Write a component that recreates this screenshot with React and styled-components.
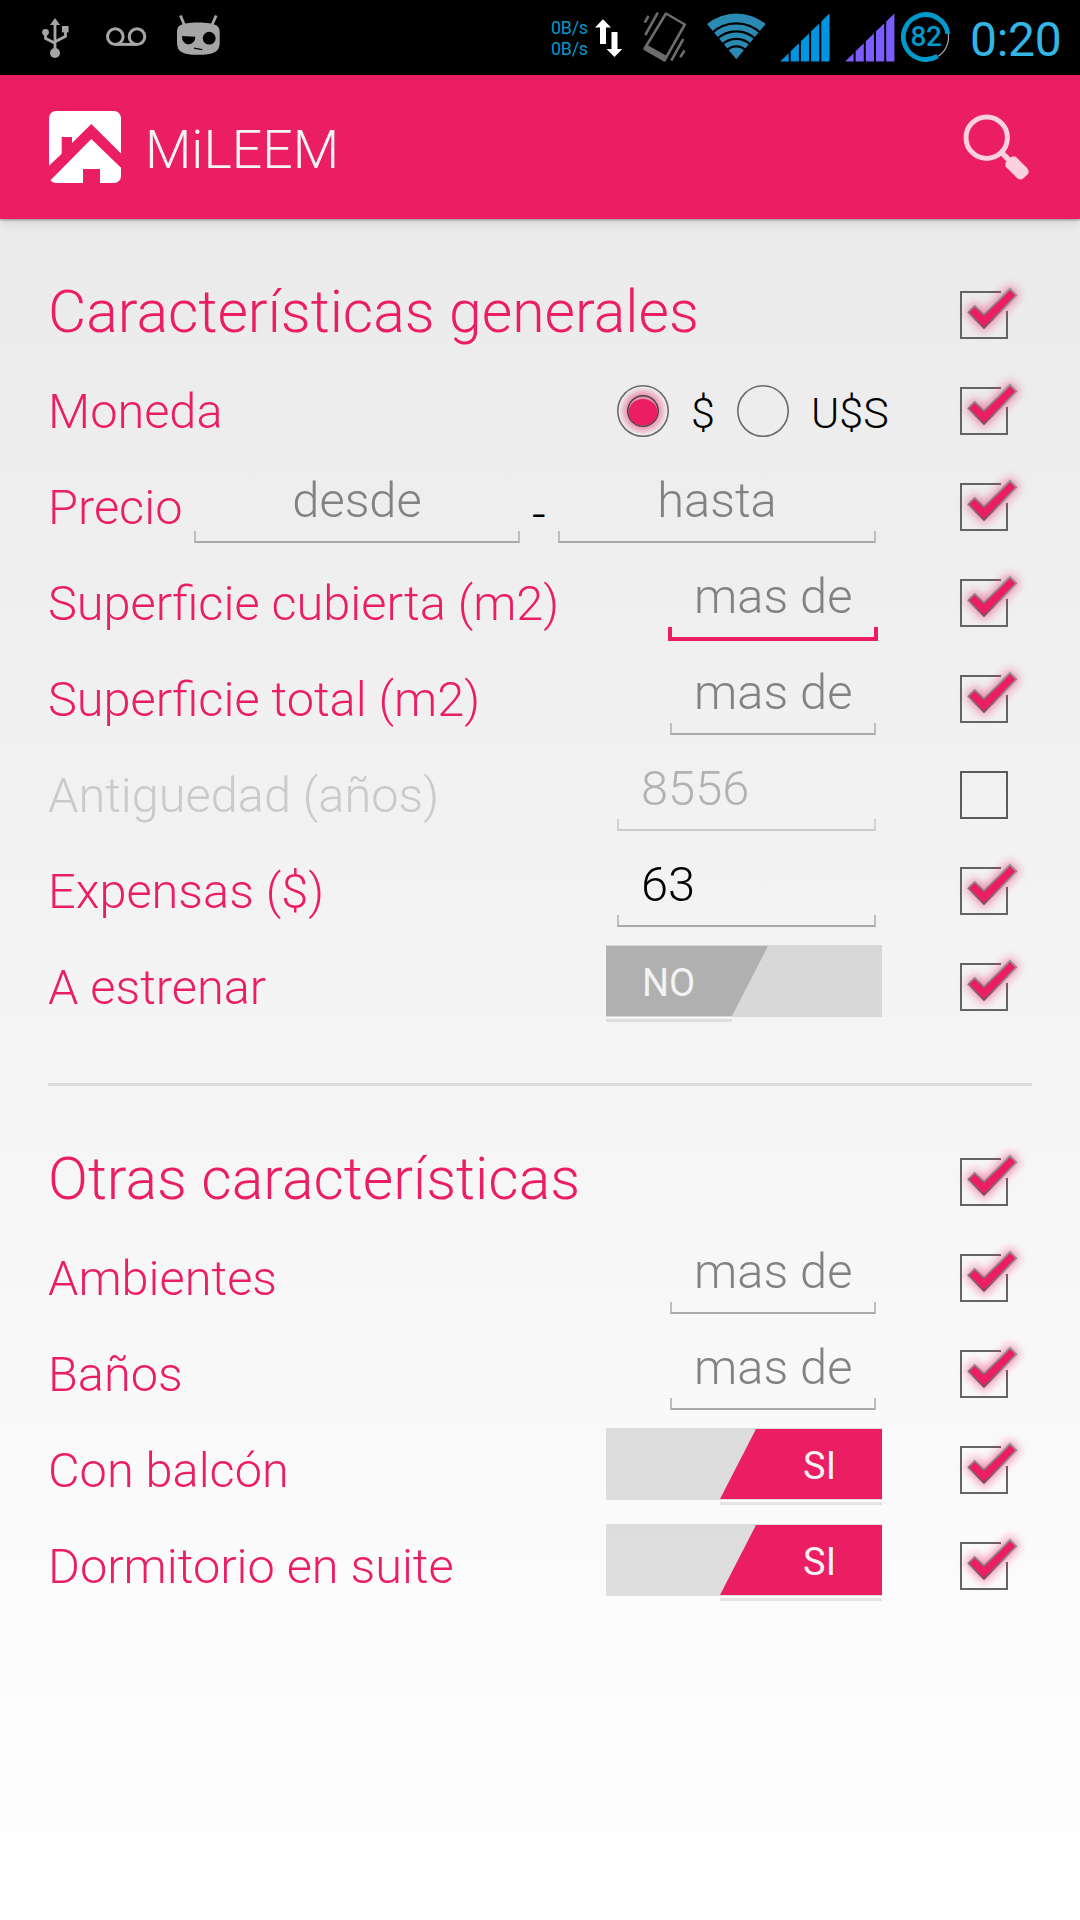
import React from "react";
import styled, { createGlobalStyle } from "styled-components";

const PINK = "#eb1e63";

const GlobalStyle = createGlobalStyle`
  * { box-sizing: border-box; }
  body { margin: 0; font-family: Roboto, "Noto Sans", sans-serif; }
`;

const Screen = styled.div`
  width: 1080px;
  height: 1920px;
  display: flex;
  flex-direction: column;
  overflow: hidden;
  background: linear-gradient(#e8e8e8, #ffffff);
`;

const StatusBar = styled.header`
  display: flex;
  height: 75px;
  background: #000;
`;

const StatusIcons = styled.svg`
  display: block;
  flex: none;
  width: ${(p) => p.$w}px;
  height: 75px;
`;

const Spacer = styled.div`
  flex: 1;
`;

const NetSpeed = styled.div`
  width: 43px;
  padding-top: 17px;
  font-size: 17.8px;
  line-height: 21px;
  letter-spacing: -0.2px;
  color: #0099cc;
  white-space: nowrap;
`;

const Battery = styled.div`
  display: grid;
  width: 50px;
  height: 75px;
  margin-right: 19px;
  > * { grid-area: 1 / 1; }
`;

const BatteryText = styled.span`
  justify-self: center;
  font-size: 28px;
  font-weight: 500;
  line-height: 73px;
  letter-spacing: -0.4px;
  color: #0099cc;
`;

const Clock = styled.time`
  width: 110px;
  font-size: 48px;
  line-height: 79px;
  color: #33b5e5;
  letter-spacing: -0.3px;
`;

const ActionBar = styled.nav`
  display: flex;
  align-items: center;
  height: 144px;
  padding: 0 48px 0 49px;
  background: ${PINK};
  box-shadow: 0 1px 2px rgba(0, 0, 0, 0.35), 0 3px 10px rgba(0, 0, 0, 0.12);
`;

const AppTitle = styled.h1`
  flex: 1;
  margin: 0;
  padding: 5px 0 0 24px;
  font-size: 53.6px;
  font-weight: 300;
  color: #f3f3f3;
`;

const Section = styled.section`
  display: flex;
  flex-direction: column;
  margin: ${(p) => p.$top}px 48px 0;
`;

const Divider = styled.hr`
  width: 984px;
  height: 3px;
  margin: 48px 48px 0;
  border: 0;
  background: #dcdcdc;
`;

const Row = styled.div`
  display: flex;
  height: 96px;
`;

const Label = styled.span`
  flex: 1;
  font-size: 48.7px;
  font-weight: 300;
  line-height: 98px;
  white-space: nowrap;
  color: ${(p) => (p.$off ? "#cacaca" : PINK)};
`;

const Heading = styled.h2`
  flex: 1;
  margin: 0;
  font-size: 58.9px;
  font-weight: 300;
  line-height: 90px;
  white-space: nowrap;
  color: ${PINK};
`;

const Control = styled.div`
  display: flex;
  margin-right: ${(p) => p.$gap}px;
`;

const Field = styled.div`
  display: flex;
  flex-direction: column;
  width: ${(p) => p.$w}px;
`;

const FieldText = styled.span`
  height: 72px;
  padding: 9px 24px 0;
  font-size: 48.8px;
  font-weight: 300;
  line-height: 65px;
  white-space: nowrap;
  text-align: ${(p) => (p.$tone === "hint" ? "center" : "left")};
  color: ${(p) => ({ hint: "#828282", value: "#000", off: "#b2b2b2" })[p.$tone]};
`;

const Underline = styled.span`
  height: ${(p) => (p.$focus ? 14 : 12)}px;
  margin: 0 ${(p) => (p.$focus ? -2 : 0)}px;
  border: ${(p) => (p.$focus ? `4px solid ${PINK}` : "2px solid #bebebe")};
  border-top: 0;
  ${(p) => !p.$focus && "border-bottom-color: #a9a9a9;"}
  ${(p) => p.$off && "border-color: #d2d2d2; border-bottom-color: #cbcbcb;"}
`;

const Dash = styled.span`
  width: 38px;
  padding-top: 11px;
  font-size: 48px;
  line-height: 90px;
  font-weight: 300;
  text-align: center;
  color: #000;
`;

const RadioMark = styled.svg`
  flex: none;
  width: 60px;
  height: 96px;
`;

const RadioText = styled.span`
  width: ${(p) => p.$w}px;
  padding-left: 14px;
  font-size: 43px;
  font-weight: 300;
  line-height: 100px;
  color: #000;
`;

const Track = styled.div`
  display: flex;
  justify-content: ${(p) => (p.$on ? "flex-end" : "flex-start")};
  width: 276px;
  height: 72px;
  margin-top: 6px;
  background: rgba(0, 0, 0, 0.115);
`;

const ThumbColumn = styled.div`
  display: flex;
  flex-direction: column;
  flex: none;
  width: 162px;
`;

const Thumb = styled.div`
  width: 162px;
  height: 70px;
  margin-top: 1px;
  padding: 0 ${(p) => (p.$on ? 46 : 0)}px 0 ${(p) => (p.$on ? 0 : 36)}px;
  font-size: 38px;
  line-height: 75px;
  text-align: ${(p) => (p.$on ? "right" : "left")};
  color: #f3f3f3;
  background: ${(p) => (p.$on ? PINK : "#b0b0b0")};
  clip-path: ${(p) =>
    p.$on ? "polygon(36px 0, 100% 0, 100% 100%, 0 100%)" : "polygon(0 0, 100% 0, 126px 100%, 0 100%)"};
`;

const ThumbShadow = styled.div`
  flex: none;
  width: ${(p) => (p.$on ? 162 : 126)}px;
  height: 3px;
  margin-top: 3px;
  background: rgba(0, 0, 0, 0.085);
`;

const CheckMark = styled.svg`
  flex: none;
  width: 80px;
  height: 96px;
`;

function Check({ on = true }) {
  return (
    <CheckMark viewBox="952 0 80 96">
      <defs>
        <filter id="glow" x="-50%" y="-50%" width="200%" height="200%">
          <feGaussianBlur stdDeviation="5" />
        </filter>
        <linearGradient id="edge" x1="0" y1="0" x2="0" y2="1">
          <stop offset="0.3" stopColor="#939393" />
          <stop offset="1" stopColor="#75505a" />
        </linearGradient>
      </defs>
      {on ? (
        <>
          <path d="M1001 25H961V71H1007V44" fill="none" stroke="#646464" strokeWidth="2" />
          <path d="M967 45L975 37L984 46L1010 20L1018 28L984 63Z" fill={PINK} stroke={PINK} strokeWidth="3" opacity="0.5" filter="url(#glow)" />
          <path d="M968.3 45.3L974.7 38.9L984 48L1010 21.800L1016.500 28.300L984 61Z" fill={PINK} stroke="url(#edge)" strokeWidth="1.700" />
        </>
      ) : (
        <path d="M961 25H1007V71H961Z" fill="none" stroke="#575b5d" strokeWidth="2" />
      )}
    </CheckMark>
  );
}

function Radio({ on }) {
  return (
    <RadioMark viewBox="0 0 60 96">
      <circle cx="26" cy="48" r="25.2" fill="none" stroke="#6a6a6a" strokeWidth="1.6" />
      {on && (
        <>
          <defs>
            <radialGradient id="halo">
              <stop offset="0.6" stopColor={PINK} stopOpacity="0.5" />
              <stop offset="1" stopColor={PINK} stopOpacity="0" />
            </radialGradient>
          </defs>
          <circle cx="26" cy="48" r="24" fill="url(#halo)" />
          <circle cx="26" cy="48" r="15.2" fill="#e98fae" stroke="#444" strokeWidth="1.5" />
          <ellipse cx="26" cy="49.2" rx="14.4" ry="13.3" fill={PINK} />
        </>
      )}
    </RadioMark>
  );
}

function TextField({ width, tone = "hint", focus, children }) {
  return (
    <Field $w={width}>
      <FieldText $tone={tone}>{children}</FieldText>
      <Underline $focus={focus} $off={tone === "off"} />
    </Field>
  );
}

function Switch({ on }) {
  return (
    <Track $on={on}>
      <ThumbColumn>
        <Thumb $on={on}>{on ? "SI" : "NO"}</Thumb>
        <ThumbShadow $on={on} />
      </ThumbColumn>
    </Track>
  );
}

function FormRow({ label, off, gap = 76, children }) {
  return (
    <Row>
      <Label $off={off}>{label}</Label>
      <Control $gap={gap}>{children}</Control>
      <Check on={!off} />
    </Row>
  );
}

function LeftStatus() {
  return (
    <StatusIcons $w={240} viewBox="0 0 240 75">
      <g fill="#a6a6a6">
        <circle cx="55" cy="53" r="5" />
        <path d="M55 18L60 25H50Z" />
        <circle cx="45.5" cy="32.3" r="3.4" />
        <path d="M62 26h6.6v6.4h-6.6z" />
      </g>
      <path d="M55 22V52M45.5 32V38.3L55 43.3M65.5 32V36.3L55 41.8" fill="none" stroke="#a6a6a6" strokeWidth="2.8" />
      <g fill="none" stroke="#a6a6a6" strokeWidth="3">
        <circle cx="115.3" cy="36.6" r="7.8" />
        <circle cx="137" cy="36.6" r="7.8" />
        <path d="M115 44.4H137" />
      </g>
      <path d="M180.5 15.5L184.3 25M216.2 15.5L212 25" stroke="#a6a6a6" strokeWidth="2.8" />
      <path d="M177 33C177 25 180 23 198 22.5C216 23 219.7 25 219.7 33V43C219.7 52 213 54.8 198 54.8C183 54.8 177 52 177 43Z" fill="#a6a6a6" />
      <path d="M182 36L195.3 36.8C195.3 41.5 192 44.3 188.6 44.3C184.8 44.3 181.8 41 182 36Z" fill="#000" />
      <circle cx="209.2" cy="38.2" r="6.4" fill="#000" />
      <path d="M194 48.2L202.3 49.7" stroke="#000" strokeWidth="1.2" />
    </StatusIcons>
  );
}

const WIFI_GAPS = [36, 28, 20.5, 13];
const bars = (x0, n) =>
  Array.from({ length: n }, (_, i) => {
    const a = x0 + i * 10.2;
    const b = a + 8.2;
    const top = (x) => 61.5 - (x - x0 + 0.3) * 0.975;
    return `M${a} 61.5V${top(a)}L${b} ${top(b)}V61.5Z`;
  }).join("");

function RightStatus() {
  return (
    <StatusIcons $w={307} viewBox="594 0 307 75">
      <path d="M603 19.3L611 27.5H606V44H600V27.5H595ZM614.5 57L622.3 49H617.5V32H611.5V49H606.5Z" fill="#fff" />
      <g stroke="#6c6c6c" fill="none" strokeWidth="2.6">
        <path d="M666 13.5L684.800 24.500L664.500 60.300L644.500 48.800Z" strokeLinejoin="round" />
        <path d="M657.800 12.700L645.300 35M683.300 39L671.300 60.700M648.500 16L644.700 22.700M684.500 50.500L680.300 57.300" />
        <path d="M646 47.500L666.500 59" strokeWidth="5.500" />
      </g>
      <path d="M736.3 59.3L707 24A46 46 0 0 1 765.7 24Z" fill="#2a8ab3" />
      <g fill="none" stroke="#000" strokeWidth="2.2">
        {WIFI_GAPS.map((r) => (
          <path key={r} d={`M${736.3 - r * 0.7} ${59.3 - r * 0.714}A${r} ${r} 0 0 1 ${736.3 + r * 0.7} ${59.3 - r * 0.714}`} />
        ))}
      </g>
      <path d={bars(780.5, 5)} fill="#0095e0" />
      <path d={bars(845.4, 5)} fill="#7a5cff" />
    </StatusIcons>
  );
}

export default function App() {
  return (
    <>
      <GlobalStyle />
      <Screen>
        <StatusBar>
          <LeftStatus />
          <Spacer />
          <NetSpeed>
            <div>0B/s</div>
            <div>0B/s</div>
          </NetSpeed>
          <RightStatus />
          <Battery>
            <StatusIcons $w={50} viewBox="901 0 50 75">
              <path d="M948.2 33A23 23 0 0 1 938 56.3" fill="none" stroke="#aaa" strokeWidth="1.2" />
              <path d="M947.9 33.8A22.4 22.4 0 1 0 937.6 56" fill="none" stroke="#0099cc" strokeWidth="4.8" />
            </StatusIcons>
            <BatteryText>82</BatteryText>
          </Battery>
          <Clock>0:20</Clock>
        </StatusBar>

        <ActionBar>
          <svg width="72" height="72" viewBox="49 111 72 72">
            <rect x="49" y="111" width="72" height="72" rx="7" fill="#fff" />
            <path d="M91.3 124L121 153.5V167.7L91.3 139L50.7 180L49 183V165.7L61.7 153.7V137H72V143Z" fill={PINK} />
            <path d="M83 169H100V183H83Z" fill={PINK} />
          </svg>
          <AppTitle>MiLEEM</AppTitle>
          <svg width="72" height="72" viewBox="960 111 72 72">
            <circle cx="986.7" cy="137.7" r="20.7" fill="none" stroke="#fbd0df" strokeWidth="5" />
            <path d="M1001.5 152.5L1010 161" stroke="#fbd0df" strokeWidth="5.5" />
            <path d="M1012 156.5H1015.5L1027 168Q1030 171.5 1027.5 174.5L1023.5 178.3Q1020 180.8 1017 178L1005.5 166.5V162.5Z" fill="#fbd0df" />
          </svg>
        </ActionBar>

        <Section $top={48}>
          <Row>
            <Heading>Características generales</Heading>
            <Check />
          </Row>
          <FormRow label="Moneda" gap={62}>
            <Radio on />
            <RadioText $w={60}>$</RadioText>
            <Radio />
            <RadioText $w={93}>U$S</RadioText>
          </FormRow>
          <FormRow label="Precio">
            <TextField width={326}>desde</TextField>
            <Dash>-</Dash>
            <TextField width={318}>hasta</TextField>
          </FormRow>
          <FormRow label="Superficie cubierta (m2)">
            <TextField width={206} focus>mas de</TextField>
          </FormRow>
          <FormRow label="Superficie total (m2)">
            <TextField width={206}>mas de</TextField>
          </FormRow>
          <FormRow label="Antiguedad (años)" off>
            <TextField width={259} tone="off">8556</TextField>
          </FormRow>
          <FormRow label="Expensas ($)">
            <TextField width={259} tone="value">63</TextField>
          </FormRow>
          <FormRow label="A estrenar" gap={70}>
            <Switch on={false} />
          </FormRow>
        </Section>

        <Divider />

        <Section $top={48}>
          <Row>
            <Heading>Otras características</Heading>
            <Check />
          </Row>
          <FormRow label="Ambientes">
            <TextField width={206}>mas de</TextField>
          </FormRow>
          <FormRow label="Baños">
            <TextField width={206}>mas de</TextField>
          </FormRow>
          <FormRow label="Con balcón" gap={70}>
            <Switch on />
          </FormRow>
          <FormRow label="Dormitorio en suite" gap={70}>
            <Switch on />
          </FormRow>
        </Section>
      </Screen>
    </>
  );
}
